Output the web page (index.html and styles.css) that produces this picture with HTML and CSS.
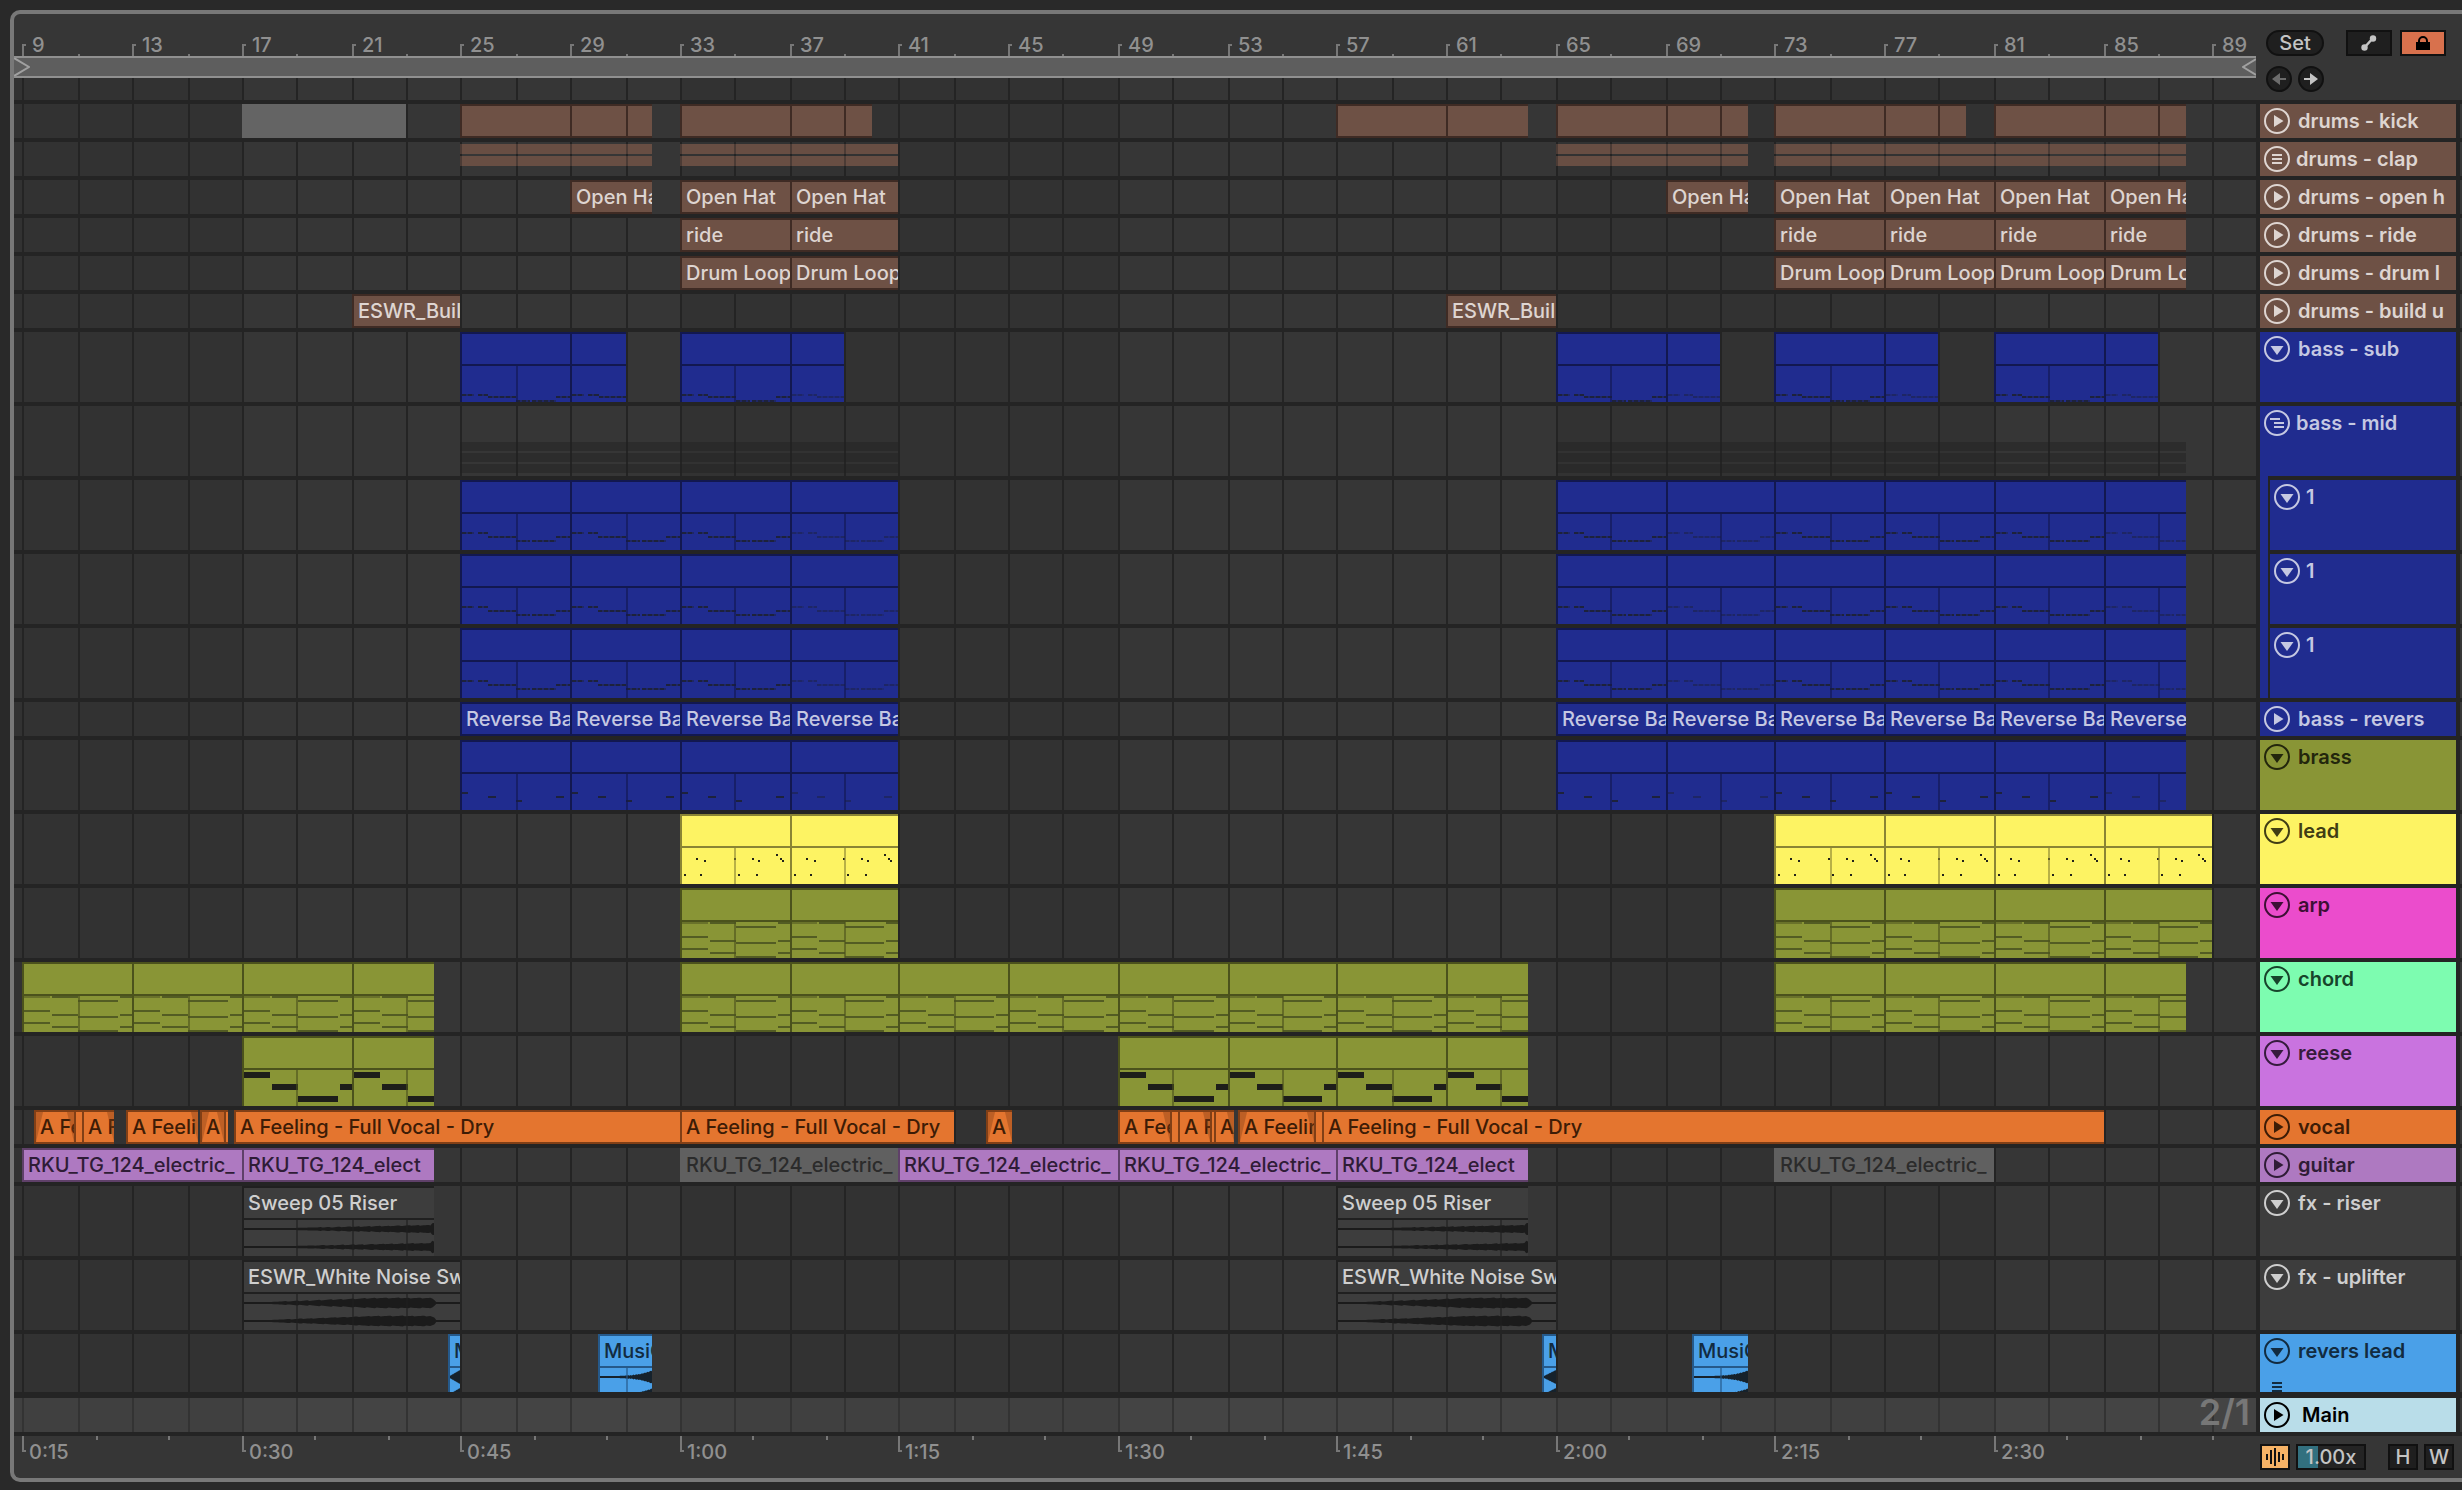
FILE: index.html
```html
<!DOCTYPE html>
<html lang="en">
<head>
<meta charset="utf-8">
<title>Arrangement</title>
<link rel="stylesheet" href="styles.css">
</head>
<body>
<svg class="defs" aria-hidden="true">
  <symbol id="i-right" viewBox="0 0 26 26"><circle cx="13" cy="13" r="12" fill="none" stroke="currentColor" stroke-width="2"/><path d="M10 7v12l9.500-6z" fill="currentColor"/></symbol>
  <symbol id="i-down" viewBox="0 0 26 26"><circle cx="13" cy="13" r="12" fill="none" stroke="currentColor" stroke-width="2"/><path d="M6.500 10h13l-6.500 9z" fill="currentColor"/></symbol>
  <symbol id="i-group" viewBox="0 0 26 26"><circle cx="13" cy="13" r="12" fill="none" stroke="currentColor" stroke-width="2"/><path d="M8 9h10M8 13h10M8 17h10" stroke="currentColor" stroke-width="2"/></symbol>
  <symbol id="i-open" viewBox="0 0 26 26"><circle cx="13" cy="13" r="12" fill="none" stroke="currentColor" stroke-width="2"/><path d="M6 9h10M10 13h10M10 17h10" stroke="currentColor" stroke-width="2"/></symbol>
</svg>

<main class="panel">
  <div class="top">
    <div class="timebar">
      <div class="ruler" id="bars"></div>
      <div class="loop">
        <svg width="16" height="18" viewBox="0 0 16 18"><path d="M0 0l15 9L0 18" fill="none" stroke="currentColor" stroke-width="2"/></svg>
        <svg width="14" height="18" viewBox="0 0 14 18"><path d="M14 1L1 9l13 8" fill="none" stroke="currentColor" stroke-width="2"/></svg>
      </div>
      <div class="scrub"><div class="grid"></div></div>
    </div>
    <div class="tools">
      <div class="tool-row">
        <button class="pill">Set</button>
        <span class="spring"></span>
        <button class="box wide" aria-label="Automation mode"><svg width="22" height="22" viewBox="0 0 22 22"><path d="M6.500 15.500L15 6" stroke="currentColor" stroke-width="2.500"/><circle cx="6.500" cy="15.500" r="3.200" fill="currentColor"/><circle cx="15" cy="6.500" r="3.200" fill="currentColor"/></svg></button>
        <button class="box wide lock" aria-label="Lock envelopes"><svg width="22" height="22" viewBox="0 0 22 22"><path d="M4 10h14v8H4z" fill="currentColor"/><path d="M7 11V9a4 4 0 0 1 8 0v2" fill="none" stroke="currentColor" stroke-width="2"/></svg></button>
      </div>
      <div class="tool-row">
        <button class="round off" aria-label="Previous locator"><svg width="22" height="22" viewBox="0 0 22 22"><path d="M4 11L12 5v5h6v2h-6v5z" fill="currentColor"/></svg></button>
        <button class="round" aria-label="Next locator"><svg width="22" height="22" viewBox="0 0 22 22"><path d="M18 11L10 5v5H4v2h6v5z" fill="currentColor"/></svg></button>
      </div>
    </div>
  </div>

  <div class="tracks">
    <div class="backdrop"><div class="grid"></div></div>

    <div class="track brown"><div class="lane" data-track="kick"></div><div class="head"><button class="fold" aria-label="Unfold"><svg><use href="#i-right"/></svg></button><span>drums - kick</span></div></div>
    <div class="track brown"><div class="lane" data-track="clap"></div><div class="head group"><button class="fold" aria-label="Unfold group"><svg><use href="#i-group"/></svg></button><span>drums - clap</span></div></div>
    <div class="track brown"><div class="lane" data-track="hat"></div><div class="head"><button class="fold" aria-label="Unfold"><svg><use href="#i-right"/></svg></button><span>drums - open h</span></div></div>
    <div class="track brown"><div class="lane" data-track="ride"></div><div class="head"><button class="fold" aria-label="Unfold"><svg><use href="#i-right"/></svg></button><span>drums - ride</span></div></div>
    <div class="track brown"><div class="lane" data-track="loop"></div><div class="head"><button class="fold" aria-label="Unfold"><svg><use href="#i-right"/></svg></button><span>drums - drum l</span></div></div>
    <div class="track brown"><div class="lane" data-track="build"></div><div class="head"><button class="fold" aria-label="Unfold"><svg><use href="#i-right"/></svg></button><span>drums - build u</span></div></div>
    <div class="track tall blue"><div class="lane" data-track="sub"></div><div class="head"><button class="fold" aria-label="Fold"><svg><use href="#i-down"/></svg></button><span>bass - sub</span></div></div>
    <div class="track tall blue"><div class="lane" data-track="mid"></div><div class="head group"><button class="fold" aria-label="Fold group"><svg><use href="#i-open"/></svg></button><span>bass - mid</span></div></div>
    <div class="track tall blue child"><div class="lane" data-track="mid1"></div><div class="nest"><div class="head"><button class="fold" aria-label="Fold"><svg><use href="#i-down"/></svg></button><span>1</span></div></div></div>
    <div class="track tall blue child"><div class="lane" data-track="mid1"></div><div class="nest"><div class="head"><button class="fold" aria-label="Fold"><svg><use href="#i-down"/></svg></button><span>1</span></div></div></div>
    <div class="track tall blue child"><div class="lane" data-track="mid1"></div><div class="nest"><div class="head"><button class="fold" aria-label="Fold"><svg><use href="#i-down"/></svg></button><span>1</span></div></div></div>
    <div class="track blue"><div class="lane" data-track="reverse"></div><div class="head"><button class="fold" aria-label="Unfold"><svg><use href="#i-right"/></svg></button><span>bass - revers</span></div></div>
    <div class="track tall olive"><div class="lane" data-track="brass"></div><div class="head"><button class="fold" aria-label="Fold"><svg><use href="#i-down"/></svg></button><span>brass</span></div></div>
    <div class="track tall yellow"><div class="lane" data-track="lead"></div><div class="head"><button class="fold" aria-label="Fold"><svg><use href="#i-down"/></svg></button><span>lead</span></div></div>
    <div class="track tall pink"><div class="lane" data-track="arp"></div><div class="head"><button class="fold" aria-label="Fold"><svg><use href="#i-down"/></svg></button><span>arp</span></div></div>
    <div class="track tall mint"><div class="lane" data-track="chord"></div><div class="head"><button class="fold" aria-label="Fold"><svg><use href="#i-down"/></svg></button><span>chord</span></div></div>
    <div class="track tall orchid"><div class="lane" data-track="reese"></div><div class="head"><button class="fold" aria-label="Fold"><svg><use href="#i-down"/></svg></button><span>reese</span></div></div>
    <div class="track orange"><div class="lane" data-track="vocal"></div><div class="head"><button class="fold" aria-label="Unfold"><svg><use href="#i-right"/></svg></button><span>vocal</span></div></div>
    <div class="track purple"><div class="lane" data-track="guitar"></div><div class="head"><button class="fold" aria-label="Unfold"><svg><use href="#i-right"/></svg></button><span>guitar</span></div></div>
    <div class="track tall grey"><div class="lane" data-track="riser"></div><div class="head"><button class="fold" aria-label="Fold"><svg><use href="#i-down"/></svg></button><span>fx - riser</span></div></div>
    <div class="track tall grey"><div class="lane" data-track="uplifter"></div><div class="head"><button class="fold" aria-label="Fold"><svg><use href="#i-down"/></svg></button><span>fx - uplifter</span></div></div>
    <div class="track last sky"><div class="lane" data-track="revlead"></div><div class="head stacked"><button class="fold" aria-label="Fold"><svg><use href="#i-down"/></svg></button><span>revers lead</span><i class="lanes"></i></div></div>
    <div class="track main"><div class="lane"><span class="zoom">2/1</span></div><div class="head"><button class="fold" aria-label="Unfold"><svg><use href="#i-right"/></svg></button><span>Main</span></div></div>
  </div>

  <div class="bottom">
    <div class="ruler" id="times"></div>
    <div class="footer-tools">
      <button class="box wave" aria-label="Show waveforms"><svg width="22" height="22" viewBox="0 0 22 22"><path d="M3 8v6M7 4v14M11 2v18M15 6v10M19 8v6" stroke="currentColor" stroke-width="2"/></svg></button>
      <input class="speed" type="text" aria-label="Zoom" value="1.00x">
      <span class="spring"></span>
      <button class="box">H</button>
      <button class="box">W</button>
    </div>
  </div>
</main>
<script src="script.js"></script>
</body>
</html>
```
FILE: styles.css
```css
* { box-sizing: border-box; }

:root {
  --line: #242424;
  --view-start: 8.674;
  --view-bars: 81.914;
}

body {
  margin: 0;
  padding: 10px 0 8px 10px;
  background: #292929;
  color: #c4c4c4;
  font: 500 20px/24px Inter, "Liberation Sans", sans-serif;
}

button, input { font: inherit; color: inherit; margin: 0; padding: 0; }
svg { display: block; }
.defs { position: absolute; width: 0; height: 0; }

.panel {
  border: 4px solid #787878;
  border-right: 0;
  border-radius: 10px 0 0 10px;
  background: #363636;
  overflow: hidden;
}

/* Everything on the time axis: --s and --e are bar numbers */
.clip, .band, .shade, .vline, .mid, .tick {
  position: absolute;
  left: round(calc((var(--s) - var(--view-start)) / var(--view-bars) * 100%), 2px);
}
.clip, .band, .shade {
  width: calc(round(calc((var(--e) - var(--view-start)) / var(--view-bars) * 100%), 2px) - round(calc((var(--s) - var(--view-start)) / var(--view-bars) * 100%), 2px));
}

/* Top */
.top { display: grid; grid-template-columns: 1fr 206px; border-bottom: 4px solid var(--line); }
.ruler { position: relative; height: 42px; overflow: hidden; color: #909090; }
.tick { white-space: nowrap; }
#bars .tick { bottom: 0; height: 12px; border-left: 2px solid #777; padding-left: 8px; }
#bars .tick.minor { height: 2px; }
#bars .tick span { display: block; margin-top: -11px; }
#bars .tick:not(.minor)::before { content: ""; position: absolute; top: 0; left: 0; width: 2px; height: 2px; background: #777; }
#times .tick { top: 0; height: 16px; border-left: 2px solid #777; padding-left: 5px; }
#times .tick.minor { height: 4px; }
#times .tick span { display: block; margin-top: 4px; }
#times .tick:not(.minor)::before { content: ""; position: absolute; bottom: 0; left: 0; width: 2px; height: 2px; background: #777; }

.loop {
  display: flex;
  justify-content: space-between;
  height: 22px;
  background: #5e5e5e;
  border: solid #909090;
  border-width: 2px 0;
  color: #a0a0a0;
}
.scrub { position: relative; height: 22px; }
.tools { display: flex; flex-direction: column; gap: 10px; padding: 16px 16px 0 10px; }
.tool-row { display: flex; gap: 8px; }
.tool-row .round { margin-right: -2px; }
.spring { flex: 1; }

.pill, .box, .round {
  display: grid;
  place-items: center;
  height: 26px;
  border: 2px solid #111;
  background: #1f1f1f;
  line-height: 22px;
  color: #c4c4c4;
}
.pill { width: 58px; border-radius: 13px; }
.round { width: 26px; border-radius: 13px; }
.off { color: #6c6c6c; }
.box { width: 30px; }
.wide { width: 46px; }
.lock { background: #d8714d; color: #000; }

/* Grid behind the lanes */
.grid { position: absolute; inset: 0; overflow: hidden; background: #323232; }
.shade { top: 0; bottom: 0; background: #363636; }
.vline { top: 0; bottom: 0; width: 2px; background: var(--line); }

.tracks { position: relative; background: var(--line); }
.backdrop { position: absolute; inset: 0 206px 0 0; }
.track {
  position: relative;
  display: grid;
  grid-template-columns: 1fr 196px 2px;
  column-gap: 4px;
  height: 38px;
  border-bottom: 4px solid var(--line);
}
.track::before { content: ""; position: absolute; top: 0; bottom: 0; right: 202px; width: 4px; background: var(--line); }
.track::after { content: ""; background: #363636; }
.tall { height: 74px; }
.last { height: 64px; border-bottom-width: 6px; }
.lane { position: relative; overflow: hidden; }

.head {
  display: flex;
  align-items: flex-start;
  gap: 8px;
  padding: 4px 0 0 4px;
  background: var(--c);
  color: var(--t);
  font-weight: 600;
  white-space: nowrap;
  overflow: hidden;
}
.head.group { gap: 6px; }
.head span { line-height: 26px; }
.fold { border: 0; background: none; width: 26px; height: 26px; flex: none; }
.fold svg { width: 26px; height: 26px; }
.nest { display: grid; padding-left: 8px; background: var(--c); box-shadow: 0 -4px var(--c); }
.nest .head { gap: 6px; border-left: 2px solid var(--line); box-shadow: 0 -4px var(--line); }
.stacked { position: relative; }
.lanes {
  position: absolute;
  left: 12px;
  bottom: 0;
  width: 10px;
  height: 10px;
  background: repeating-linear-gradient(var(--t) 0 2px, transparent 2px 4px);
}

/* Colours: c fill, d border, t text, n notes */
.brown { --c: #6e5145; --d: #3f2b24; --t: #ded5d1; --n: #222; }
.blue { --c: #202c8f; --d: #121850; --t: #c5c8e2; --n: #1d223c; }
.olive { --c: #899536; --d: #4b521c; --t: #23260c; --n: #535c23; }
.yellow { --c: #fdf363; --d: #8a8434; --t: #403d14; --n: #22221a; }
.pink { --c: #eb4ccc; --t: #3d0f34; }
.mint { --c: #7dfcb0; --t: #17442b; }
.orchid { --c: #c973df; --t: #351b3c; }
.orange { --c: #e4752f; --d: #813f16; --t: #3d1c06; }
.purple { --c: #ae79c1; --d: #5f4069; --t: #2f1c36; }
.grey { --c: #3d3d3d; --d: #202020; --t: #cfcfcf; --n: #1b1b1b; }
.sky { --c: #4aa0e8; --d: #25598a; --t: #122b40; --n: #16222c; }
.main { --c: #b9dde9; --t: #000; }
.main .lane { background: rgba(255, 255, 255, .07); }
.main .head { gap: 12px; }

/* Clips */
.clip {
  top: 0;
  bottom: 0;
  border: solid var(--d);
  border-width: 2px 0 2px 2px;
  background: var(--c);
  color: var(--t);
  overflow: hidden;
  white-space: nowrap;
}
.clip .name { position: relative; display: block; height: 30px; line-height: 30px; padding-left: 4px; }
.clip.midi, .clip.audio { border-bottom: 0; }
.preview { position: relative; border-top: 2px solid var(--d); height: 38px; }
.preview svg { position: absolute; left: -2px; top: 0; height: 36px; fill: var(--n); shape-rendering: crispEdges; }
.audio .preview svg { shape-rendering: auto; }
.dim svg { opacity: .5; }
.mid { top: 34px; bottom: 0; width: 2px; background: var(--d); opacity: .6; }
.reeseclip { --n: #1e1e1a; }
.muted { border-color: transparent; background: #606060; background-clip: border-box; color: #2b2b2b; }
.selected { border: 0; background: rgba(102, 102, 102, .97); }
.fade-l::before, .fade-r::after {
  content: "";
  position: absolute;
  top: 0;
  bottom: 0;
  width: 7px;
  background: var(--d);
  opacity: .4;
}
.fade-l::before { left: 0; clip-path: polygon(0 0, 100% 0, 0 100%); }
.fade-r::after { right: 0; clip-path: polygon(0 0, 100% 0, 100% 100%); }

.band { height: 10px; background: var(--c); opacity: .9; }
.band.b1 { top: 2px; }
.band.b2 { top: 14px; }
.mid-band { height: 9px; background: #222; opacity: .45; }
.mid-band.b1 { top: 36px; }
.mid-band.b2 { top: 47px; }
.mid-band.b3 { top: 58px; }

.zoom {
  position: absolute;
  right: 6px;
  top: 0;
  font-size: 36px;
  line-height: 28px;
  font-weight: 600;
  color: #777;
}

/* Bottom */
.bottom { display: grid; grid-template-columns: 1fr 202px; column-gap: 4px; }
.footer-tools { display: flex; gap: 6px; padding: 8px 8px 8px 0; }
.wave { background: #f5b266; color: #111; }
.speed {
  width: 70px;
  height: 26px;
  border: 2px solid #111;
  border-radius: 0;
  background: linear-gradient(90deg, #32707f 20px, #242424 20px);
  color: #c4c4c4;
  text-align: center;
}
```
FILE: script.js
```js
const NS = 'http://www.w3.org/2000/svg';

function add(parent, className, s, e) {
  const node = document.createElement('div');
  node.className = className;
  if (s !== undefined) node.style.setProperty('--s', s);
  if (e !== undefined) node.style.setProperty('--e', e);
  parent.append(node);
  return node;
}

// Grid: a line every two bars, shading that alternates every sixteen
document.querySelectorAll('.grid').forEach(grid => {
  [[17, 33], [49, 65], [81, 97]].forEach(([s, e]) => add(grid, 'shade', s, e));
  for (let bar = 9; bar <= 89; bar += 2) add(grid, 'vline', bar);
});

// Rulers
const bars = document.getElementById('bars');
for (let bar = 9; bar <= 89; bar += 2) {
  const major = (bar - 9) % 4 === 0;
  const tick = add(bars, major ? 'tick' : 'tick minor', bar);
  if (major) tick.innerHTML = `<span>${bar}</span>`;
}
const times = document.getElementById('times');
for (let sec = 15; sec <= 165; sec += 5) {
  const major = sec % 15 === 0 && sec < 165;
  const tick = add(times, major ? 'tick' : 'tick minor', 1 + sec / 1.875);
  if (major) tick.innerHTML = `<span>${Math.floor(sec / 60)}:${String(sec % 60).padStart(2, '0')}</span>`;
}

// Note shapes for four bars, as [x, y, width, height] on a 110 x 36 field
function dashes(x, y, w) {
  const out = [];
  for (let i = 0; i < w; i += 6) out.push([x + i, y, Math.min(4, w - i), 2]);
  return [...out, [x, y, w, 2, .5]];
}
const bassLine = (a, b, c) => [
  ...dashes(2, a, 12), ...dashes(18, a, 10), ...dashes(28, b, 28),
  ...dashes(56, c, 14), ...dashes(72, c, 24), ...dashes(96, b, 14)];
const chordNotes = [
  [2, 0, 26, 2, .6], [30, 0, 26, 2], [98, 0, 12, 2],
  [56, 4, 40, 2], [2, 14, 26, 2], [30, 18, 26, 2], [98, 18, 12, 2],
  [56, 20, 40, 2], [2, 26, 26, 2], [30, 30, 26, 2], [98, 30, 12, 2], [56, 34, 40, 2]];
const notes = {
  sub: bassLine(28, 30, 34),
  mid1: bassLine(18, 22, 26),
  brass: [[2, 18, 6, 2], [28, 22, 8, 2], [56, 26, 6, 2], [96, 22, 8, 2]],
  lead: [[4, 26], [16, 10], [24, 12], [20, 26], [54, 10], [58, 26], [72, 10], [78, 12], [76, 26], [96, 6], [100, 10], [102, 12]].map(p => [...p, 2, 2]),
  arp: chordNotes,
  chord: chordNotes,
  reese: [[2, 2, 26, 6], [30, 14, 26, 6], [56, 26, 40, 6], [98, 14, 12, 6]],
};

// Two-channel waveform outline from an amplitude curve
function wave(curve) {
  let d = '';
  [9, 27].forEach((cy, ch) => {
    let up = '', down = '';
    for (let i = 0; i <= 110; i++) {
      const a = curve(i / 110);
      const n = a > 1.5 ? (((i * 37 + ch * 11) % 17) / 17 - .5) * .8 : 0;
      up += `L${i} ${(cy - a - n).toFixed(1)}`;
      down = `L${i} ${(cy + a + n).toFixed(1)}` + down;
    }
    d += 'M' + up.slice(1) + down + 'Z';
  });
  return d;
}
const ramp = (t, a, b) => Math.max(0, Math.min(1, (t - a) / (b - a)));
const waves = {
  riser: t => t > .985 ? 6 : 1 + 2.8 * ramp(t, .25, .95),
  uplifter: t => t > .885 ? 1 : 1 + 4 * ramp(t, .12, .62) - 2 * ramp(t, .865, .885),
  revlead: t => 1 + 5.500 * Math.pow(t, 4),
  revshort: t => 7 * t,
};

function clip(lane, s, e, opt = {}) {
  const node = add(lane, 'clip ' + (opt.cls || ''), s, e);
  const text = e - s < 3.5 && opt.short ? opt.short : opt.name;
  if (text || opt.notes) {
    const name = document.createElement('span');
    name.className = 'name';
    name.textContent = text || '';
    node.append(name);
  }
  const shape = opt.notes || opt.wave;
  if (!shape) return;
  node.classList.add(opt.notes ? 'midi' : 'audio');
  const preview = add(node, 'preview');
  const svg = document.createElementNS(NS, 'svg');
  svg.setAttribute('viewBox', '0 0 110 36');
  svg.setAttribute('preserveAspectRatio', 'none');
  svg.style.width = `calc((100% + 2px) * ${opt.notes ? 4 / (e - s) : 1})`;
  svg.innerHTML = opt.notes
    ? notes[shape].map(([x, y, w, h, o = 1]) => `<rect x="${x}" y="${y}" width="${w}" height="${h}" opacity="${o}"/>`).join('')
    : `<path d="${wave(waves[shape])}"/>`;
  preview.append(svg);
  for (let bar = 9; bar < e; bar += 2) {
    if (bar > s) add(lane, 'mid ' + (opt.cls || ''), bar);
  }
}

// Consecutive clips: run([25, 29, 31]) is two clips that touch
const run = (lane, edges, opt = {}) => edges.slice(1).forEach((e, i) => {
  const s = edges[i];
  const dim = opt.faint && opt.faint.includes(s) ? ' dim' : '';
  clip(lane, s, e, { ...opt, cls: (opt.cls || '') + dim });
});

const four = [33, 37, 41];
const tail = [73, 77, 81, 85, 88];
const A = [25, 29, 33, 37, 41];
const B = [65, 69, 73, 77, 81, 85, 88];
const full = 'A Feeling - Full Vocal - Dry';

const tracks = {
  kick(l) {
    clip(l, 17, 23, { cls: 'selected' });
    [[25, 29, 31, 32], [33, 37, 39, 40], [57, 61, 64], [65, 69, 71, 72], [73, 77, 79, 80], [81, 85, 87, 88]].forEach(r => run(l, r));
  },
  clap(l) {
    [[25, 32], [33, 41], [65, 72], [73, 88]].forEach(([s, e]) => {
      add(l, 'band b1', s, e);
      add(l, 'band b2', s, e);
      for (let bar = s; bar < e; bar += 2) add(l, 'vline', bar).style.opacity = .4;
    });
  },
  hat(l) { [[29, 32], four, [69, 72], tail].forEach(r => run(l, r, { name: 'Open Hat', short: 'Open Ha' })); },
  ride(l) { [four, tail].forEach(r => run(l, r, { name: 'ride' })); },
  loop(l) { [four, tail].forEach(r => run(l, r, { name: 'Drum Loop', short: 'Drum Lo' })); },
  build(l) { [[21, 25], [61, 65]].forEach(r => run(l, r, { name: 'ESWR_Buil' })); },
  sub(l) { [[25, 29, 31], [33, 37, 39], [65, 69, 71], [73, 77, 79], [81, 85, 87]].forEach(r => run(l, r, { notes: 'sub', faint: [37, 69, 77, 85] })); },
  mid(l) { [[25, 41], [65, 88]].forEach(([s, e]) => ['b1', 'b2', 'b3'].forEach(b => add(l, 'band mid-band ' + b, s, e))); },
  mid1(l) { [A, B].forEach(r => run(l, r, { notes: 'mid1', faint: [37, 69, 85] })); },
  reverse(l) { [A, B].forEach(r => run(l, r, { name: 'Reverse Ba', short: 'Reverse' })); },
  brass(l) { [A, B].forEach(r => run(l, r, { notes: 'brass', faint: [37, 69, 85], cls: 'blue' })); },
  lead(l) { [four, [73, 77, 81, 85, 89]].forEach(r => run(l, r, { notes: 'lead' })); },
  arp(l) { [four, [73, 77, 81, 85, 89]].forEach(r => run(l, r, { notes: 'arp', cls: 'olive' })); },
  chord(l) { [[9, 13, 17, 21, 24], [33, 37, 41, 45, 49, 53, 57, 61, 64], tail].forEach(r => run(l, r, { notes: 'chord', cls: 'olive' })); },
  reese(l) { [[17, 21, 24], [49, 53, 57, 61, 64]].forEach(r => run(l, r, { notes: 'reese', cls: 'olive reeseclip' })); },
  vocal(l) {
    [[9.41, 10.9, 'fade-l fade-r', 'A Fe'], [10.9, 11.16], [11.16, 12.33, 'fade-r', 'A F'], [12.77, 15.4, 'fade-r', 'A Feeli'],
     [15.47, 16.35, 'fade-l fade-r', 'A'], [16.35, 16.5], [16.71, 33, '', full], [33, 43, '', full], [44.18, 45.13, 'fade-l fade-r', 'A'],
     [49, 50.91, 'fade-r', 'A Fee'], [50.91, 51.2], [51.2, 52.37, 'fade-r', 'A F'], [52.37, 52.51], [52.51, 53.24, 'fade-r', 'A'],
     [53.39, 56.17, 'fade-l fade-r', 'A Feelin'], [56.17, 56.46], [56.46, 85, '', full]]
      .forEach(([s, e, cls, name]) => clip(l, s, e, { cls, name }));
  },
  guitar(l) {
    [[9, 17], [41, 49], [49, 57]].forEach(r => run(l, r, { name: 'RKU_TG_124_electric_' }));
    [[17, 24], [57, 64]].forEach(r => run(l, r, { name: 'RKU_TG_124_elect' }));
    [[33, 41], [73, 81]].forEach(r => run(l, r, { name: 'RKU_TG_124_electric_', cls: 'muted' }));
  },
  riser(l) { [[17, 24], [57, 64]].forEach(r => run(l, r, { name: 'Sweep 05 Riser', wave: 'riser' })); },
  uplifter(l) { [[17, 25], [57, 65]].forEach(r => run(l, r, { name: 'ESWR_White Noise Sw', wave: 'uplifter' })); },
  revlead(l) {
    [[24.55, 25], [64.5, 65]].forEach(r => run(l, r, { name: 'M', wave: 'revshort' }));
    [[30, 32], [70, 72]].forEach(r => run(l, r, { name: 'MusiC', wave: 'revlead' }));
  },
};

document.querySelectorAll('[data-track]').forEach(lane => tracks[lane.dataset.track](lane));
```
